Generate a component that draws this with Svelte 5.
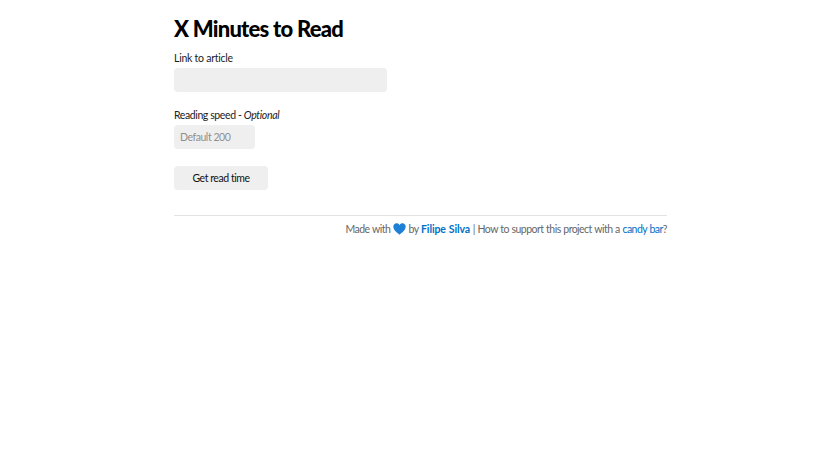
<script>
  let url = $state('');
  let speed = $state('');
</script>

<main class="page">
  <h1>X Minutes to Read</h1>
  <form class="form" onsubmit={(e) => e.preventDefault()}>
    <div class="field">
      <label for="url">Link to article</label>
      <input id="url" class="wide" type="text" bind:value={url} />
    </div>
    <div class="field">
      <label class="tight" for="speed">Reading speed - <em>Optional</em></label>
      <input id="speed" class="short" type="text" placeholder="Default 200" bind:value={speed} />
    </div>
    <button type="submit">Get read time</button>
  </form>
  <footer>
    Made with <svg class="heart" viewBox="0 0 24 22" aria-label="blue heart"><path d="M12 21.5C9 18.8 .6 13.6 .6 6.9 .6 3.2 3.3 .6 6.6 .6c2.300 0 4.300 1.200 5.400 3.300C13.100 1.800 15.100 .6 17.400 .6c3.300 0 6 2.600 6 6.300C23.400 13.600 15 18.800 12 21.500z"/></svg> by <a href="#a" class="strong">Filipe Silva</a> | How to support this project with a <a href="#b">candy bar</a>?
  </footer>
</main>

<style>
  :global(body) {
    margin: 0;
    background: #fff;
    font-family: Lato, "Noto Sans", sans-serif;
  }
  .page {
    width: 493px;
    margin-left: 174px;
    padding-top: 15px;
  }
  h1 {
    margin: 0;
    font-size: 22px;
    line-height: 27px;
    font-weight: 900;
    color: #000;
    letter-spacing: -0.75px;
  }
  .form {
    display: flex;
    flex-direction: column;
    align-items: flex-start;
    margin-top: 9px;
  }
  .field {
    display: flex;
    flex-direction: column;
    align-items: flex-start;
    margin-bottom: 16px;
  }
  label {
    font-size: 10.5px;
    line-height: 15px;
    color: #222;
    margin-bottom: 2px;
    letter-spacing: -0.25px;
  }
  .tight { letter-spacing: -0.4px; }
  em { font-style: italic; letter-spacing: -0.3px; }
  input {
    box-sizing: border-box;
    height: 24px;
    border: 0;
    border-radius: 4px;
    background: #efefef;
    padding: 0 6px;
    font: inherit;
    font-size: 10.5px;
    letter-spacing: -0.45px;
    color: #222;
    outline: none;
  }
  input::placeholder { color: #8f8f8f; opacity: 1; }
  .wide { width: 213px; }
  .short { width: 81px; }
  button {
    width: 94px;
    height: 24px;
    margin-top: 1px;
    border: 0;
    border-radius: 4px;
    background: #efefef;
    color: #111;
    font: inherit;
    font-size: 10.5px;
    letter-spacing: -0.45px;
    padding: 0;
  }
  footer {
    margin-top: 25px;
    border-top: 1px solid #e3e3e3;
    padding-top: 5px;
    text-align: right;
    font-size: 10.5px;
    line-height: 16px;
    color: #666;
    letter-spacing: -0.54px;
    word-spacing: 0.5px;
  }
  a { color: #0070c9; text-decoration: none; }
  .strong { font-weight: 700; letter-spacing: -0.1px; }
  .heart {
    width: 13px;
    height: 12px;
    fill: #1e7fd6;
    vertical-align: -2px;
  }
</style>
